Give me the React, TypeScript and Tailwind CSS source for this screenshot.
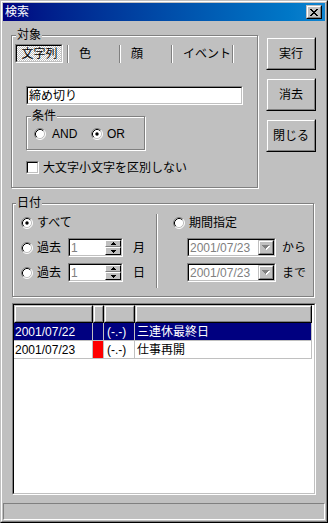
import React from "react";

const F = "font-['Liberation_Sans','Noto_Sans_CJK_JP',sans-serif]";

function Raised({ className = "", children }: { className?: string; children?: React.ReactNode }) {
  return (
    <div className={`border border-t-[#c0c0c0] border-l-[#c0c0c0] border-r-black border-b-black bg-[#c0c0c0] ${className}`}>
      <div className="w-full h-full border border-t-white border-l-white border-r-[#808080] border-b-[#808080] flex items-center justify-center">
        {children}
      </div>
    </div>
  );
}

function Sunken({ className = "", inner = "", children }: { className?: string; inner?: string; children?: React.ReactNode }) {
  return (
    <div className={`border border-t-[#808080] border-l-[#808080] border-r-white border-b-white ${className}`}>
      <div className={`w-full h-full border border-t-black border-l-black border-r-[#c0c0c0] border-b-[#c0c0c0] ${inner}`}>
        {children}
      </div>
    </div>
  );
}

function Group({ label, labelClass, className = "", children }: { label: string; labelClass: string; className?: string; children?: React.ReactNode }) {
  return (
    <div className={`relative border border-[#808080] shadow-[inset_1px_1px_0_#fff,1px_1px_0_#fff] ${className}`}>
      <span className={`absolute top-[-8px] bg-[#c0c0c0] px-[1px] leading-[14px] ${labelClass}`}>{label}</span>
      {children}
    </div>
  );
}

function Radio({ checked }: { checked?: boolean }) {
  return (
    <svg width="12" height="12" viewBox="0 0 12 12" className="shrink-0">
      <circle cx="6" cy="6" r="5" fill="#fff" />
      <path d="M9.89 2.11A5.5 5.5 0 0 0 2.11 9.89" fill="none" stroke="#808080" />
      <path d="M2.11 9.89A5.5 5.5 0 0 0 9.89 2.11" fill="none" stroke="#fff" />
      <path d="M9.18 2.82A4.5 4.5 0 0 0 2.82 9.18" fill="none" stroke="#000" />
      <path d="M2.82 9.18A4.5 4.5 0 0 0 9.18 2.82" fill="none" stroke="#c0c0c0" />
      {checked && <circle cx="6" cy="6" r="1.7" fill="#000" />}
    </svg>
  );
}

function XGlyph() {
  return (
    <svg width="8" height="7" viewBox="0 0 8 7" shapeRendering="crispEdges">
      <path
        d="M0 0h2v1H0zM6 0h2v1H6zM1 1h2v1H1zM5 1h2v1H5zM2 2h4v1H2zM3 3h2v1H3zM2 4h4v1H2zM1 5h2v1H1zM5 5h2v1H5zM0 6h2v1H0zM6 6h2v1H6z"
        fill="#000"
      />
    </svg>
  );
}

function Sep() {
  return <div className="w-[2px] h-[18px] border-l border-l-[#808080] border-r border-r-white" />;
}

function Spin() {
  return (
    <Sunken className="w-[55px] h-[19px]" inner="bg-white flex items-center justify-between">
      <span className="pl-[1px] text-[#808080] leading-[14px]">1</span>
      <div className="flex flex-col w-[16px] h-[15px]">
        <div className="h-[7px] bg-[#c0c0c0] border border-t-white border-l-white border-r-black border-b-[#808080] flex items-center justify-center">
          <svg width="5" height="3" viewBox="0 0 5 3" shapeRendering="crispEdges">
            <path d="M2 0h1v1h1v1h1v1H0V2h1V1h1z" fill="#000" />
          </svg>
        </div>
        <div className="h-[8px] bg-[#c0c0c0] border border-t-white border-l-white border-r-black border-b-black flex items-center justify-center">
          <svg width="5" height="3" viewBox="0 0 5 3" shapeRendering="crispEdges">
            <path d="M0 0h5v1H4v1H3v1H2V2H1V1H0z" fill="#000" />
          </svg>
        </div>
      </div>
    </Sunken>
  );
}

function Combo() {
  return (
    <Sunken className="w-[89px] h-[19px]" inner="bg-white flex items-center justify-between">
      <span className="pl-[1px] text-[#808080] leading-[14px]">2001/07/23</span>
      <Raised className="w-[16px] h-[15px]">
        <svg width="8" height="5" viewBox="0 0 8 5" shapeRendering="crispEdges">
          <path d="M1 1h7v1H7v1H6v1H5v1H4V4H3V3H2V2H1z" fill="#fff" />
          <path d="M0 0h7v1H6v1H5v1H4v1H3V3H2V2H1V1H0z" fill="#808080" />
        </svg>
      </Raised>
    </Sunken>
  );
}

export default function App() {
  return (
    <div className={`w-[328px] h-[523px] ${F} text-[12px] leading-[14px] text-black bg-[#c0c0c0] border border-t-[#c0c0c0] border-l-[#c0c0c0] border-r-black border-b-black`}>
      <div className="w-full h-full border border-t-white border-l-white border-r-[#808080] border-b-[#808080] p-[1px]">
        <div className="flex flex-col w-[322px] h-[517px]">
          {/* Title bar */}
          <div className="h-[18px] shrink-0 flex items-center justify-between bg-linear-to-r from-[#000080] to-[#1084d0] pl-[2px] pr-[3px]">
            <span className="text-white leading-[18px]">検索</span>
            <Raised className="w-[16px] h-[14px]">
              <XGlyph />
            </Raised>
          </div>

          {/* Top section */}
          <div className="flex items-start mt-[14px]">
            <Group label="対象" labelClass="left-[4px]" className="ml-[8px] w-[247px] h-[153px]">
              <div className="flex items-start pl-[3px] pt-[8px]">
                <Sunken
                  className="w-[48px] h-[19px]"
                  inner="bg-[image:repeating-conic-gradient(#fff_0_25%,#c0c0c0_0_50%)] bg-[length:2px_2px] flex items-center justify-center pt-[1px] pl-[1px]"
                >
                  文字列
                </Sunken>
                <div className="flex items-center ml-[4px] mt-[1px]">
                  <Sep />
                  <div className="w-[50px] h-[18px] pl-[10px] flex items-center">色</div>
                  <Sep />
                  <div className="w-[50px] h-[18px] pl-[10px] flex items-center">顔</div>
                  <Sep />
                  <div className="w-[59px] h-[18px] pl-[10px] flex items-center">イベント</div>
                  <Sep />
                </div>
              </div>
              <Sunken className="ml-[14px] mt-[23px] w-[217px] h-[19px]" inner="bg-white flex items-center pl-[1px]">
                締め切り
              </Sunken>
              <Group label="条件" labelClass="left-[4px]" className="ml-[14px] mt-[11px] w-[119px] h-[34px]">
                <div className="flex items-center h-[12px] mt-[11px] pl-[7px]">
                  <Radio />
                  <span className="ml-[6px] w-[39px]">AND</span>
                  <Radio checked />
                  <span className="ml-[4px]">OR</span>
                </div>
              </Group>
              <div className="flex items-center ml-[14px] mt-[11px] h-[13px]">
                <Sunken className="w-[13px] h-[13px] shrink-0" inner="bg-white" />
                <span className="ml-[4px]">大文字小文字を区別しない</span>
              </div>
            </Group>

            <div className="ml-[8px] mt-[2px] flex flex-col gap-[8px]">
              <Raised className="w-[50px] h-[33px]">実行</Raised>
              <Raised className="w-[50px] h-[33px]">消去</Raised>
              <Raised className="w-[50px] h-[33px]">閉じる</Raised>
            </div>
          </div>

          {/* Date group */}
          <Group label="日付" labelClass="left-[3px]" className="ml-[9px] mt-[15px] w-[302px] h-[94px] shrink-0">
            <div className="flex">
              <div className="w-[143px] pl-[8px] pt-[9px] flex flex-col gap-[6px]">
                <div className="flex items-center h-[19px]">
                  <Radio checked />
                  <span className="ml-[4px]">すべて</span>
                </div>
                <div className="flex items-center h-[19px]">
                  <Radio />
                  <span className="ml-[4px] w-[31px]">過去</span>
                  <Spin />
                  <span className="ml-[10px]">月</span>
                </div>
                <div className="flex items-center h-[19px]">
                  <Radio />
                  <span className="ml-[4px] w-[31px]">過去</span>
                  <Spin />
                  <span className="ml-[10px]">日</span>
                </div>
              </div>
              <div className="mt-[10px] w-[2px] h-[74px] border-l border-l-[#808080] border-r border-r-white" />
              <div className="pl-[15px] pt-[9px] flex flex-col gap-[6px]">
                <div className="flex items-center h-[19px]">
                  <Radio />
                  <span className="ml-[4px]">期間指定</span>
                </div>
                <div className="flex items-center h-[19px] ml-[14px]">
                  <Combo />
                  <span className="ml-[6px]">から</span>
                </div>
                <div className="flex items-center h-[19px] ml-[14px]">
                  <Combo />
                  <span className="ml-[6px]">まで</span>
                </div>
              </div>
            </div>
          </Group>

          {/* List */}
          <Sunken className="ml-[9px] mt-[6px] w-[304px] h-[192px] shrink-0" inner="bg-white">
            <div className="flex h-[18px]">
              <Raised className="w-[79px] h-[18px]" />
              <Raised className="w-[11px] h-[18px]" />
              <Raised className="w-[31px] h-[18px]" />
              <Raised className="w-[177px] h-[18px]" />
            </div>
            <div className="flex h-[18px] bg-[#000080] text-white w-[298px]">
              <div className="w-[79px] border-r border-b border-[#c0c0c0] pl-[1px] flex items-center">2001/07/22</div>
              <div className="w-[11px] border-r border-b border-[#c0c0c0]" />
              <div className="w-[31px] border-r border-b border-[#c0c0c0] pl-[3px] flex items-center">(-.-)</div>
              <div className="w-[177px] border-r border-b border-[#c0c0c0] pl-[2px] flex items-center">三連休最終日</div>
            </div>
            <div className="flex h-[18px] w-[298px]">
              <div className="w-[79px] border-r border-b border-[#c0c0c0] pl-[1px] flex items-center">2001/07/23</div>
              <div className="w-[11px] border-r border-b border-[#c0c0c0] bg-[#ff0000]" />
              <div className="w-[31px] border-r border-b border-[#c0c0c0] pl-[3px] flex items-center">(-.-)</div>
              <div className="w-[177px] border-r border-b border-[#c0c0c0] pl-[2px] flex items-center">仕事再開</div>
            </div>
          </Sunken>

          {/* Status bar */}
          <div className="mt-[8px] h-[17px] shrink-0 border border-t-[#808080] border-l-[#808080] border-r-white border-b-white" />
        </div>
      </div>
    </div>
  );
}
